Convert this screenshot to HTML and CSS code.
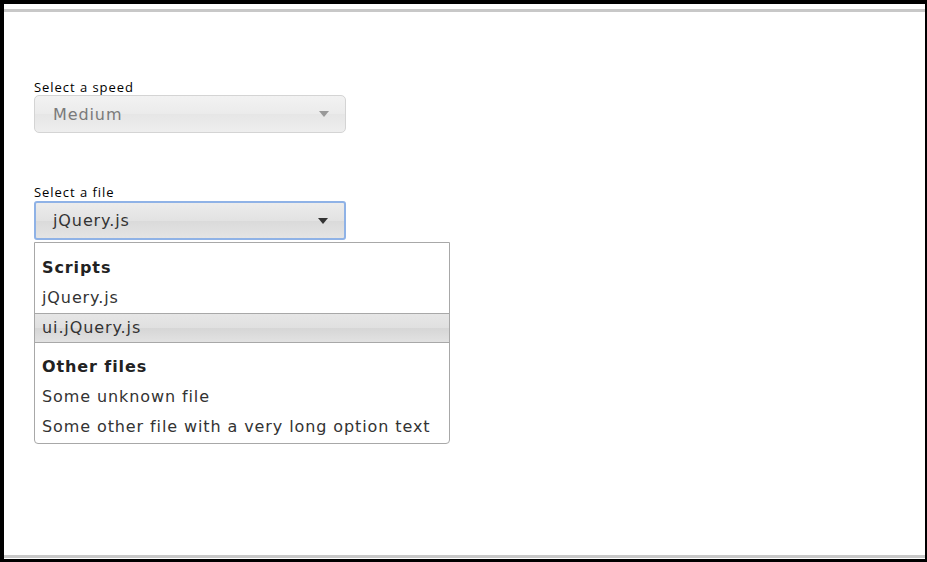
FILE: index.html
```html
<!DOCTYPE html>
<html>
<head>
<meta charset="utf-8">
<link rel="stylesheet" href="styles.css">
</head>
<body>
<div class="frame">
  <div class="page">
    <div class="field">
      <div class="label">Select a speed</div>
      <div class="select disabled">
        <span class="value">Medium</span>
        <span class="arrow"></span>
      </div>
    </div>
    <div class="field second">
      <div class="label">Select a file</div>
      <div class="select focused">
        <span class="value">jQuery.js</span>
        <span class="arrow"></span>
      </div>
      <ul class="menu">
        <li class="group">Scripts</li>
        <li class="item">jQuery.js</li>
        <li class="item active">ui.jQuery.js</li>
        <li class="group gap">Other files</li>
        <li class="item">Some unknown file</li>
        <li class="item">Some other file with a very long option text</li>
      </ul>
    </div>
  </div>
</div>
</body>
</html>
```
FILE: styles.css
```css
html, body { margin: 0; padding: 0; }
body { width: 927px; height: 562px; background: #000; overflow: hidden; }
.frame {
  margin: 4px 2px 3px 4px;
  height: 555px;
  background: #fff;
  box-sizing: border-box;
  border-top: 5px solid #fff;
  display: flex;
  flex-direction: column;
}
.page {
  flex: 1;
  border-top: 3px solid #c8c8c8;
  border-bottom: 3px solid #c8c8c8;
  margin-bottom: 1px;
  padding: 67px 0 0 30px;
  font-family: "DejaVu Sans", Verdana, sans-serif;
}
.field { width: 416px; }
.second { margin-top: 51px; }
.label {
  font-family: "Open Sans", sans-serif;
  font-size: 13px;
  letter-spacing: 0.95px;
  color: #000;
  line-height: 16px;
  height: 16px;
  margin-bottom: 0;
}
.select {
  width: 312px;
  height: 38px;
  box-sizing: border-box;
  border-radius: 5px;
  border: 1px solid #d4d4d4;
  display: flex;
  align-items: center;
  justify-content: space-between;
  padding: 0 16px 0 18px;
  font-size: 16px;
  letter-spacing: 0.9px;
}
.disabled {
  color: #7a7a7a;
  background: linear-gradient(#f2f2f2, #ebebeb 50%, #e6e6e6 51%, #eeeeee);
}
.focused {
  margin-top: 1px;
  height: 39px;
  color: #333;
  border: 2px solid #8fb2e6;
  border-radius: 3px;
  background: linear-gradient(#ececec, #e2e2e2 50%, #dadada 51%, #e4e4e4);
  padding-left: 17px;
}
.arrow {
  width: 0; height: 0;
  border-left: 5px solid transparent;
  border-right: 5px solid transparent;
  border-top: 6px solid #999;
}
.focused .arrow { border-top-color: #333; }
.menu {
  list-style: none;
  margin: 2px 0 0 0;
  padding: 10px 0 1px 0;
  width: 416px;
  box-sizing: border-box;
  border: 1px solid #a8a8a8;
  border-radius: 0 0 4px 4px;
  font-size: 16px;
  letter-spacing: 0.9px;
  color: #333;
}
.menu li {
  height: 30px;
  line-height: 30px;
  padding-left: 7px;
}
.group { font-weight: bold; color: #222; }
.gap { margin-top: 9px; }
.active {
  background: linear-gradient(#e6e6e6, #e0e0e0 50%, #d6d6d6 51%, #e2e2e2);
  border-top: 1px solid #a8a8a8;
  border-bottom: 1px solid #a8a8a8;
  height: 28px !important;
  line-height: 28px !important;
}
```
